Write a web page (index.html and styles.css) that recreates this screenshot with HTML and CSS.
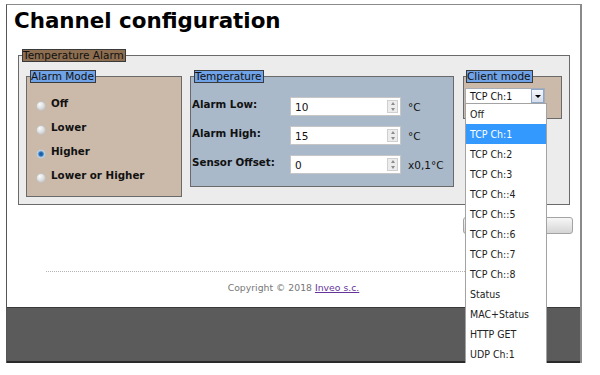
FILE: index.html
```html
<!DOCTYPE html>
<html lang="en">
<head>
    <meta charset="UTF-8">
    <meta name="viewport" content="width=device-width, initial-scale=1.0">
    <title>Channel configuration</title>
    <link rel="stylesheet" href="styles.css">
</head>
<body>
    <div class="page">
        <h1>Channel configuration</h1>
        <form class="config">
            <fieldset class="box box-main">
                <legend class="tag tag-brown">Temperature Alarm</legend>
                <div class="row">
                    <fieldset class="box box-tan mode">
                        <legend class="tag tag-blue">Alarm Mode</legend>
                        <div class="opts">
                            <label class="opt"><input type="radio" name="mode" class="radio">Off</label>
                            <label class="opt"><input type="radio" name="mode" class="radio">Lower</label>
                            <label class="opt"><input type="radio" name="mode" class="radio" checked>Higher</label>
                            <label class="opt"><input type="radio" name="mode" class="radio">Lower or Higher</label>
                        </div>
                    </fieldset>
                    <fieldset class="box box-blue temp">
                        <legend class="tag tag-blue">Temperature</legend>
                        <div class="temp-grid">
                            <label class="lbl">Alarm Low:</label>
                            <div class="num"><input type="text" value="10"><span class="spin"><i class="up"></i><i class="down"></i></span></div>
                            <span class="unit">°C</span>

                            <label class="lbl">Alarm High:</label>
                            <div class="num"><input type="text" value="15"><span class="spin"><i class="up"></i><i class="down"></i></span></div>
                            <span class="unit">°C</span>

                            <label class="lbl">Sensor Offset:</label>
                            <div class="num"><input type="text" value="0"><span class="spin"><i class="up"></i><i class="down"></i></span></div>
                            <span class="unit">x0,1°C</span>
                        </div>
                    </fieldset>
                    <fieldset class="box box-tan client">
                        <legend class="tag tag-blue">Client mode</legend>
                        <div class="select">
                            <span class="select-value">TCP Ch:1</span>
                            <span class="select-arrow"></span>
                            <ul class="select-list">
                                <li>Off</li>
                                <li class="selected">TCP Ch:1</li>
                                <li>TCP Ch:2</li>
                                <li>TCP Ch:3</li>
                                <li>TCP Ch::4</li>
                                <li>TCP Ch::5</li>
                                <li>TCP Ch::6</li>
                                <li>TCP Ch::7</li>
                                <li>TCP Ch::8</li>
                                <li>Status</li>
                                <li>MAC+Status</li>
                                <li>HTTP GET</li>
                                <li>UDP Ch:1</li>
                            </ul>
                        </div>
                    </fieldset>
                </div>
            </fieldset>
            <div class="actions">
                <!-- label hidden behind the open list -->
                <button type="button" class="btn" aria-label="Save"></button>
            </div>
        </form>
        <div class="sep"></div>
        <div class="copy">Copyright © 2018 <a href="#">Inveo s.c.</a></div>
        <div class="footer"></div>
    </div>
</body>
</html>
```

FILE: styles.css
```css
* {
    box-sizing: border-box;
}
body {
    margin: 0;
    background: #fff;
    color: #111;
    font-family: "DejaVu Sans", Verdana, sans-serif;
}
.page {
    width: 576px;
    margin: 4px 0 0 6px;
    border-top: 1px solid #8a8a8a;
    border-left: 1px solid #555;
    border-right: 2px solid #8a8a8a;
}
h1 {
    margin: 3px 0 0 7px;
    font-size: 21.4px;
    line-height: 26px;
    font-weight: bold;
    color: #000;
}

/* fieldsets */
.box {
    margin: 0;
    padding: 0;
    min-width: 0;
    border: 1px solid #6a6a6a;
}
.box-main {
    margin: 15px 10px 0 11px;
    padding: 8px 0 7px 3px;
    background: #ececec;
}
.box-tan {
    background: #cbbaaa;
}
.box-blue {
    background: #a9b9c9;
}
.tag {
    margin-left: 3px;
    padding: 0 1px 0 0;
    border: 1px solid #3a3a3a;
    font-size: 10.5px;
    line-height: 11px;
    color: #111;
}
.box-main > .tag {
    margin-left: 0;
}
.tag-brown {
    background: #8d6e50;
}
.tag-blue {
    background: #6fa2e6;
}
.row {
    display: flex;
    align-items: flex-start;
    margin-left: 4px;
}

/* alarm mode */
.mode {
    width: 156px;
}
.opts {
    padding: 8px 0 9px 9px;
}
.opt {
    display: flex;
    align-items: center;
    gap: 5px;
    height: 24px;
    font-size: 10.3px;
    font-weight: bold;
}
.radio {
    appearance: none;
    -webkit-appearance: none;
    width: 10px;
    height: 10px;
    margin: 5px 0 0 0;
    border: 1px solid #c2c2c2;
    border-radius: 50%;
    background: radial-gradient(circle at 35% 30%, #fafafa 0, #e2e2e2 45%, #bdbdbd 100%);
}
.radio:checked {
    background: radial-gradient(circle, #174f8c 0, #2a74bd 2px, #8fb9e0 3px, #dcdcdc 4px);
}

/* temperature */
.temp {
    width: 264px;
    margin-left: 8px;
}
.temp-grid {
    display: grid;
    grid-template-columns: 98px 111px auto;
    grid-auto-rows: 19px;
    row-gap: 10px;
    align-items: start;
    padding: 14px 0 12px 1px;
}
.lbl {
    font-size: 10.3px;
    font-weight: bold;
    line-height: 14px;
}
.num {
    display: flex;
    height: 19px;
    border: 1px solid #c6c6c6;
    background: #fff;
}
.num input {
    flex: 1;
    min-width: 0;
    border: 0;
    padding: 0 0 0 4px;
    background: transparent;
    font-family: "DejaVu Sans", Verdana, sans-serif;
    font-size: 10.5px;
    color: #111;
    outline: none;
}
.spin {
    display: flex;
    flex-direction: column;
    width: 11px;
    margin: 2px 2px 2px 0;
    border: 1px solid #cfcfcf;
    background: #ececec;
}
.spin i {
    flex: 1;
    display: flex;
    align-items: center;
    justify-content: center;
}
.spin i::after {
    content: "";
    border-left: 2px solid transparent;
    border-right: 2px solid transparent;
}
.spin .up::after {
    border-bottom: 3px solid #8c8c8c;
}
.spin .down::after {
    border-top: 3px solid #8c8c8c;
}
.unit {
    align-self: center;
    padding-left: 7px;
    font-size: 10.5px;
    white-space: nowrap;
}

/* client mode */
.client {
    width: 99px;
    margin-left: 9px;
}
.client > .tag {
    margin-left: 2px;
}
.select {
    position: relative;
    display: flex;
    width: 80px;
    height: 16px;
    margin: 5px 0 14px 1px;
    border: 1px solid #a7adb6;
    background: #fff;
    font-family: "DejaVu Sans Condensed", "DejaVu Sans", sans-serif;
    font-stretch: condensed;
    font-size: 10.5px;
}
.select-value {
    flex: 1;
    padding-left: 4px;
    line-height: 14px;
    color: #111;
}
.select-arrow {
    display: flex;
    align-items: center;
    justify-content: center;
    width: 13px;
    border: 1px solid #8ea6cc;
    background: linear-gradient(#f4f6fa, #d6deea);
}
.select-arrow::after {
    content: "";
    border-left: 3px solid transparent;
    border-right: 3px solid transparent;
    border-top: 3px solid #000;
}
.select-list {
    position: absolute;
    top: 14px;
    left: -1px;
    z-index: 5;
    width: 82px;
    margin: 0;
    padding: 0;
    list-style: none;
    border: 1px solid #a3a3a3;
    background: #fff;
}
.select-list li {
    height: 20px;
    line-height: 20px;
    padding-left: 4px;
    color: #222;
}
.select-list .selected {
    background: #3399ff;
    color: #fff;
}

/* bottom */
.actions {
    display: flex;
    justify-content: flex-end;
    margin: 12px 7px 0 0;
}
.btn {
    width: 110px;
    height: 17px;
    padding: 0;
    border: 1px solid #a3a3a3;
    border-radius: 3px;
    background: linear-gradient(#f7f7f7, #d5d5d5);
}
.sep {
    margin: 37px 39px 0;
    border-top: 1px dotted #b4b4b4;
}
.copy {
    margin-top: 9px;
    line-height: 14px;
    text-align: center;
    font-size: 9.3px;
    color: #777;
}
.copy a {
    color: #663399;
}
.footer {
    height: 56px;
    margin-top: 12px;
    background: #5b5b5b;
    border-top: 1px solid #3a3a3a;
    border-bottom: 2px solid #2a2a2a;
}
```
